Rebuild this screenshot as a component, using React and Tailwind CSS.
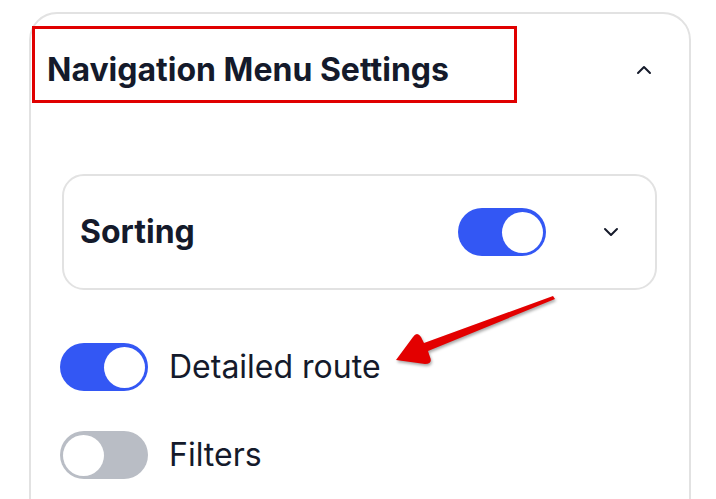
import React from "react";

function Toggle({ on }) {
  return (
    <div
      className={
        "flex h-[48px] w-[88px] shrink-0 items-center rounded-full p-[3px] " +
        (on ? "justify-end bg-[#3357f4]" : "justify-start bg-[#b9bdc5]")
      }
    >
      <div className="h-[41px] w-[41px] rounded-full bg-white" />
    </div>
  );
}

function Chevron({ up }) {
  return (
    <svg width="24" height="24" viewBox="0 0 24 24" fill="none" stroke="#161b2b" strokeWidth="2" strokeLinecap="round" strokeLinejoin="round">
      {up ? <path d="M6 15l6-6 6 6" /> : <path d="M6 9l6 6 6-6" />}
    </svg>
  );
}

export default function App() {
  return (
    <div className="relative h-[499px] w-[716px] overflow-hidden bg-white" style={{ fontFamily: "Inter, 'Noto Sans', sans-serif" }}>
      <div className="ml-[29px] mt-[12px] h-[560px] w-[662px] rounded-[28px] border-2 border-[#e2e2e2]">
        <div className="flex h-[114px] items-center justify-between pl-[16px] pr-[33px] pb-[2px]">
          <h2 className="text-[32px] font-bold text-[#141a2b]">Navigation Menu Settings</h2>
          <Chevron up />
        </div>
        <div className="ml-[31px] mr-[32px] mt-[46px] flex h-[116px] items-center rounded-[22px] border-2 border-[#e2e2e2] pl-[16px] pr-[32px]">
          <span className="flex-1 text-[32px] font-bold text-[#141a2b]">Sorting</span>
          <Toggle on />
          <div className="ml-[53px]">
            <Chevron />
          </div>
        </div>
        <div className="ml-[29px] mt-[53px] flex flex-col gap-[40px]">
          <div className="flex items-center gap-[21px]">
            <Toggle on />
            <span className="text-[32px] text-[#141a2b]">Detailed route</span>
          </div>
          <div className="flex items-center gap-[21px]">
            <Toggle />
            <span className="text-[32px] text-[#141a2b]">Filters</span>
          </div>
        </div>
      </div>

      {/* annotation: red box */}
      <div className="absolute left-[32px] top-[26px] h-[77px] w-[485px] border-[3px] border-[#e00000]" />

      {/* annotation: arrow */}
      <svg className="absolute left-0 top-0" width="716" height="499" style={{ filter: "drop-shadow(1px 2px 1.5px rgba(0,0,0,0.35))" }}>
        <path
          d="M553 296 L424 343 L421 337 Q417 331 413 337 L396 360 L425 364 Q433 364 430 357 L428 351 L555 299 Z"
          fill="#e30000"
        />
      </svg>
    </div>
  );
}
